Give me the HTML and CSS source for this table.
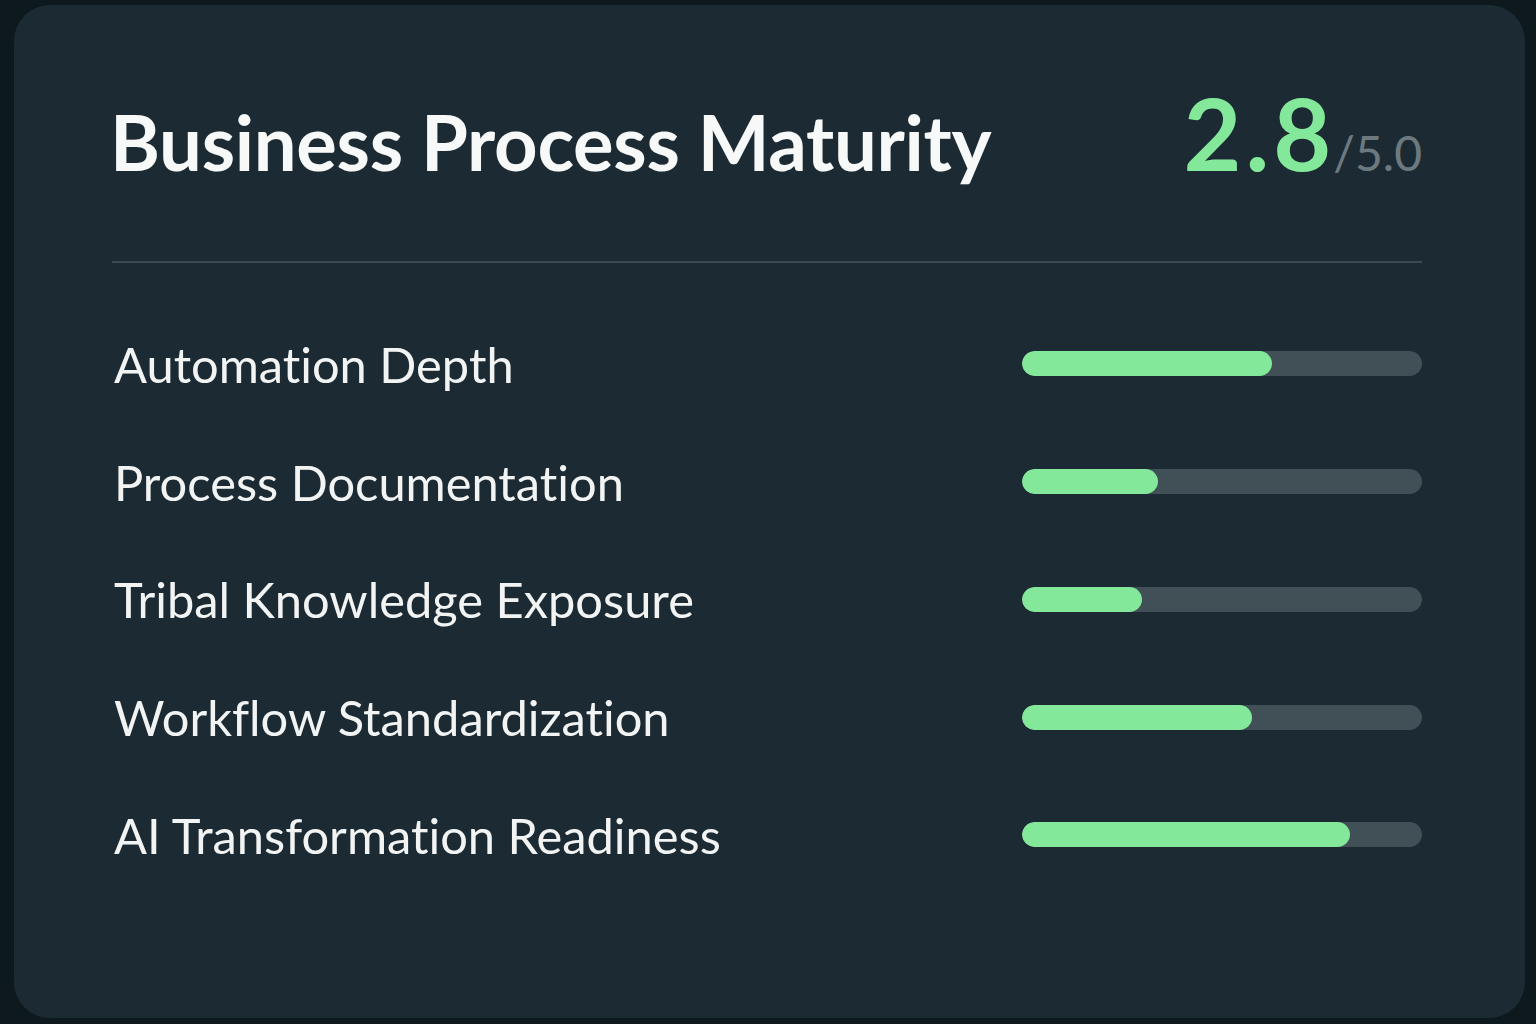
FILE: index.html
```html
<!DOCTYPE html>
<html lang="en">
<head>
<meta charset="utf-8">
<title>Business Process Maturity</title>
<link rel="stylesheet" href="styles.css">
</head>
<body>
<main class="card">
  <header class="card-header">
    <h1 class="title">Business Process Maturity</h1>
    <div class="score"><span class="score-value">2.8</span><span class="score-max">/5.0</span></div>
  </header>
  <hr class="divider">
  <ul class="metrics">
    <li class="metric">
      <span class="metric-label">Automation Depth</span>
      <div class="bar"><div class="bar-fill" style="width: 62.5%"></div></div>
    </li>
    <li class="metric">
      <span class="metric-label">Process Documentation</span>
      <div class="bar"><div class="bar-fill" style="width: 34%"></div></div>
    </li>
    <li class="metric">
      <span class="metric-label">Tribal Knowledge Exposure</span>
      <div class="bar"><div class="bar-fill" style="width: 30%"></div></div>
    </li>
    <li class="metric">
      <span class="metric-label">Workflow Standardization</span>
      <div class="bar"><div class="bar-fill" style="width: 57.5%"></div></div>
    </li>
    <li class="metric">
      <span class="metric-label">AI Transformation Readiness</span>
      <div class="bar"><div class="bar-fill" style="width: 82%"></div></div>
    </li>
  </ul>
</main>
</body>
</html>
```

FILE: styles.css
```css
html, body {
  margin: 0;
  padding: 0;
}

body {
  background: #0e191d;
  width: 1536px;
  height: 1024px;
  overflow: hidden;
  font-family: Lato, "Noto Sans", sans-serif;
  font-variant-ligatures: none;
}

.card {
  box-sizing: border-box;
  margin: 5px 11px 0 14px;
  height: 1013px;
  border-radius: 36px;
  background: #1c2b33;
  padding: 0 103px 0 96px;
  display: flex;
  flex-direction: column;
}

.card-header {
  display: flex;
  justify-content: space-between;
  align-items: baseline;
  height: 179px;
  padding-top: 77px;
  box-sizing: content-box;
}

.title {
  margin: 0;
  font-family: Lato, sans-serif;
  font-weight: 700;
  font-size: 76px;
  line-height: 1;
  color: #f7f8f8;
  letter-spacing: -0.3px;
}

.score {
  line-height: 1;
  white-space: nowrap;
}

.score-value {
  font-family: Lato, sans-serif;
  font-weight: 700;
  font-size: 100px;
  color: #84e89b;
  letter-spacing: 4px;
}

.score-max {
  font-family: Lato, sans-serif;
  font-weight: 400;
  font-size: 48px;
  color: #6c7a80;
  margin-left: -2px;
}

.divider {
  margin: 0 0 0 2px;
  border: 0;
  height: 2px;
  background: #3b4a52;
}

.metrics {
  list-style: none;
  margin: 0;
  padding: 42px 0 0 4px;
  display: flex;
  flex-direction: column;
}

.metric {
  display: flex;
  justify-content: space-between;
  align-items: center;
  height: 117.75px;
}

.metric-label {
  font-family: Lato, sans-serif;
  font-size: 48.8px;
  color: #f2f4f4;
}

.bar {
  width: 400px;
  height: 25px;
  border-radius: 13px;
  background: #414f56;
  overflow: hidden;
}

.bar-fill {
  height: 100%;
  border-radius: 13px;
  background: #84e89b;
}
```
